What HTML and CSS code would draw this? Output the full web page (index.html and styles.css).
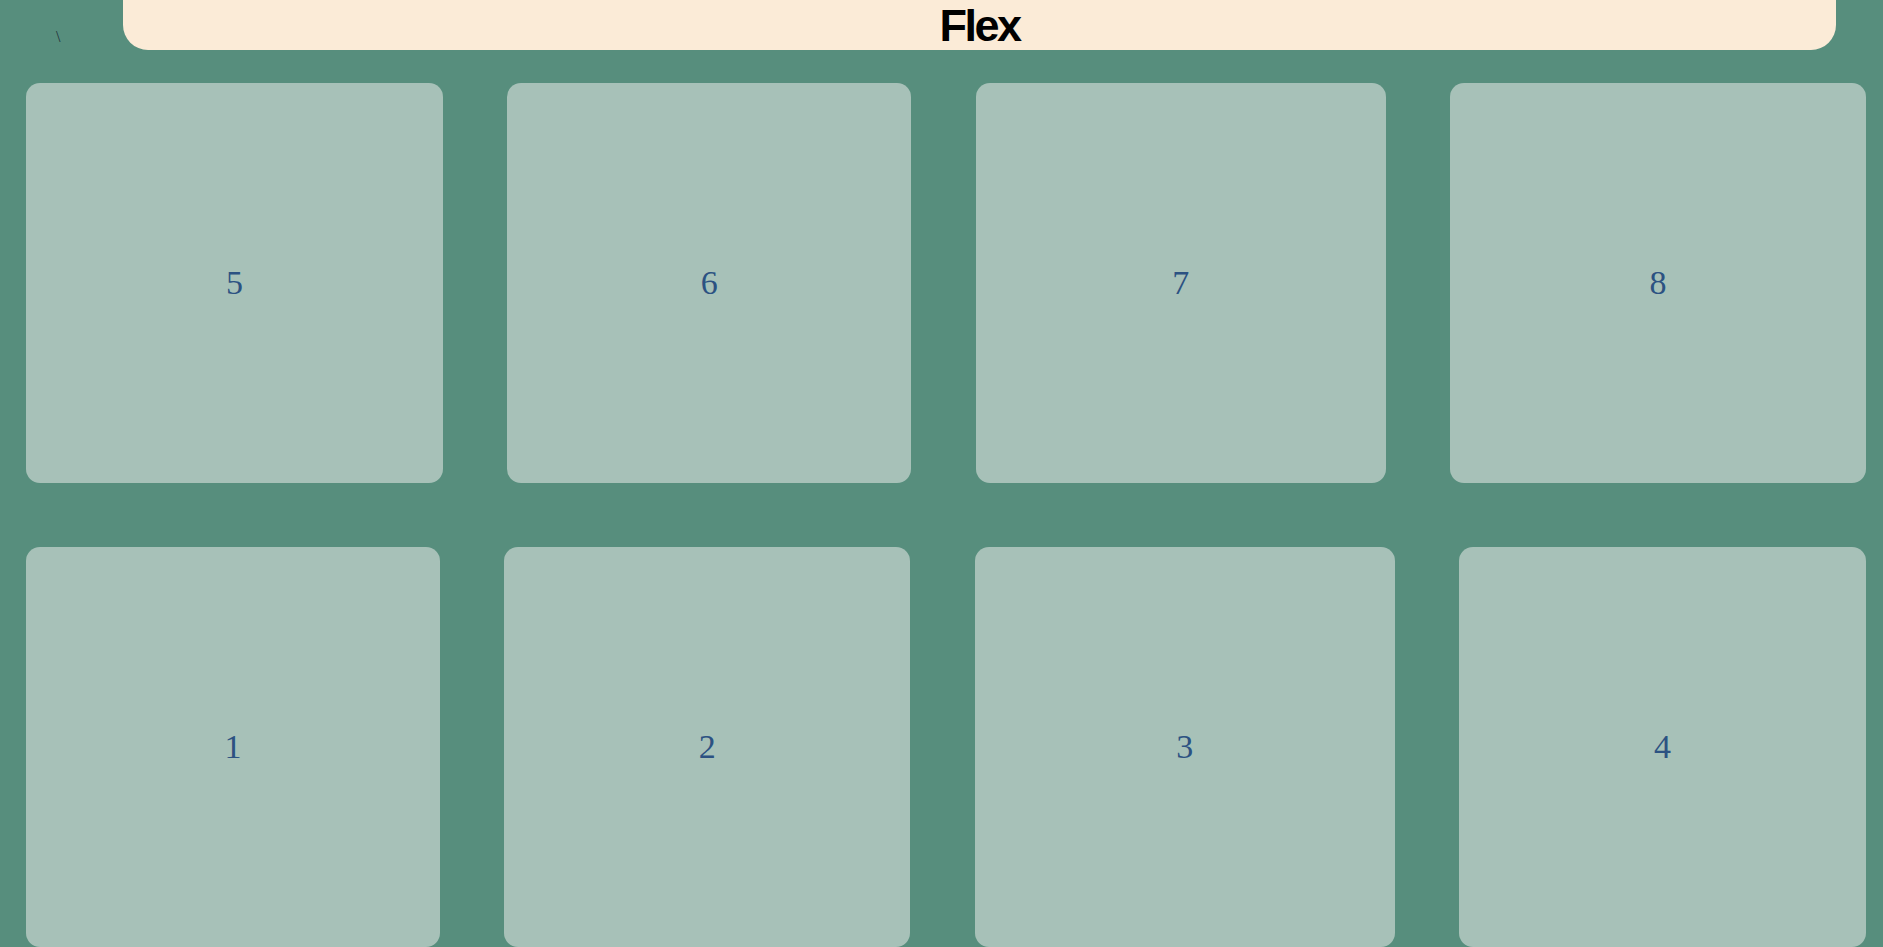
FILE: index.html
```html
<!DOCTYPE html>
<html lang="en">
<head>
    <meta charset="UTF-8">
    <meta name="viewport" content="width=device-width, initial-scale=1.0">
    <title>Flex</title>
    <link rel="stylesheet" href="styles.css">
</head>
<body>

    <div class="topbar">
        <span class="slash">\</span>
        <h1 class="title">Flex</h1>
    </div>

    <div class="board">
        <div class="box box-1">1</div>
        <div class="box box-2">2</div>
        <div class="box box-3">3</div>
        <div class="box box-4">4</div>
        <div class="box box-5">5</div>
        <div class="box box-6">6</div>
        <div class="box box-7">7</div>
        <div class="box box-8">8</div>
    </div>

</body>
</html>
```

FILE: styles.css
```css
* {
    margin: 0;
    padding: 0;
    box-sizing: border-box;
}
body {
    background-color: #578e7d;
    font-family: "Liberation Serif", serif;
}
.topbar {
    display: flex;
    height: 50px;
}
.slash {
    width: 123px;
    padding: 28px 0 0 56px;
    font-size: 16px;
    color: #1f2f3a;
}
.title {
    flex: 1;
    margin-right: 47px;
    background-color: #fbebd7;
    border-radius: 0 0 25px 25px;
    text-align: center;
    font-family: "Liberation Sans", Arial, sans-serif;
    font-size: 45px;
    line-height: 51px;
    letter-spacing: -2.5px;
    color: #000;
}
.board {
    display: flex;
    flex-wrap: wrap-reverse;
    justify-content: space-between;
    row-gap: 64px;
    margin: 33px 17px 0 26px;
}
.box {
    height: 400px;
    display: flex;
    justify-content: center;
    align-items: center;
    background-color: #a7c1b8;
    border-radius: 14px;
    font-size: 34px;
    color: #2c5282;
}
.box-1 { width: 414px; }
.box-2 { width: 406px; }
.box-3 { width: 420px; }
.box-4 { width: 407px; }
.box-5 { width: 417px; }
.box-6 { width: 404px; }
.box-7 { width: 410px; }
.box-8 { width: 416px; }
```
